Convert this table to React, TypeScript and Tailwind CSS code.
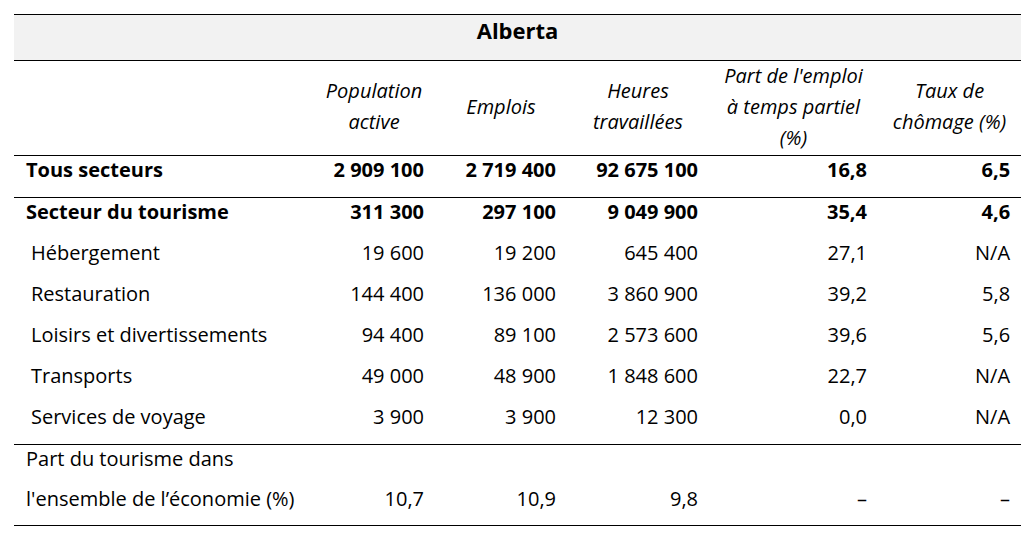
const rows: Array<{ label: string; values: string[]; bold?: boolean; indent?: boolean; borderTop?: boolean }> = [
  { label: 'Tous secteurs', values: ['2 909 100', '2 719 400', '92 675 100', '16,8', '6,5'], bold: true },
  { label: 'Secteur du tourisme', values: ['311 300', '297 100', '9 049 900', '35,4', '4,6'], bold: true, borderTop: true },
  { label: 'Hébergement', values: ['19 600', '19 200', '645 400', '27,1', 'N/A'], indent: true },
  { label: 'Restauration', values: ['144 400', '136 000', '3 860 900', '39,2', '5,8'], indent: true },
  { label: 'Loisirs et divertissements', values: ['94 400', '89 100', '2 573 600', '39,6', '5,6'], indent: true },
  { label: 'Transports', values: ['49 000', '48 900', '1 848 600', '22,7', 'N/A'], indent: true },
  { label: 'Services de voyage', values: ['3 900', '3 900', '12 300', '0,0', 'N/A'], indent: true }
];

const widths = ['w-[299px]', 'w-[122px]', 'w-[132px]', 'w-[142px]', 'w-[169px]', 'w-[143px]'];

const headers: string[][] = [
  ['Population', 'active'],
  ['Emplois'],
  ['Heures', 'travaillées'],
  ["Part de l'emploi", 'à temps partiel', '(%)'],
  ['Taux de', 'chômage (%)']
];

export default function App() {
  return (
    <div className="min-h-[543px] bg-white px-[14px] pt-[14px] text-black" style={{ fontFamily: '"Open Sans", "DejaVu Sans", sans-serif' }}>
      <table className="w-[1007px] table-fixed border-collapse">
        <colgroup>
          {widths.map((w) => (
            <col key={w} className={w} />
          ))}
        </colgroup>
        <thead>
          <tr className="border-y border-black bg-[#f2f2f2]">
            <th colSpan={6} className="h-[46px] p-0 text-center align-top text-[22px] font-bold leading-[30px]">
              Alberta
            </th>
          </tr>
          <tr className="border-b border-black">
            <th />
            {headers.map((lines) => (
              <th key={lines[0]} className="h-[95px] px-[4px] text-center align-middle text-[20px] font-normal italic leading-[31px] whitespace-nowrap">
                <div className="-mt-[4px]">
                  {lines.map((l) => (
                    <div key={l}>{l}</div>
                  ))}
                </div>
              </th>
            ))}
          </tr>
        </thead>
        <tbody className="text-[20px] leading-[27px]">
          {rows.map((r) => (
            <tr key={r.label} className={r.borderTop ? 'border-t border-black' : ''}>
              <td className={`h-[41px] pb-[14px] align-top whitespace-nowrap ${r.indent ? 'pl-[17px]' : 'pl-[12px]'} ${r.bold ? 'font-bold' : ''}`}>{r.label}</td>
              {r.values.map((v, i) => (
                <td key={i} className={`h-[41px] pb-[14px] pr-[11px] text-right align-top whitespace-nowrap ${r.bold ? 'font-bold' : ''}`}>
                  {v}
                </td>
              ))}
            </tr>
          ))}
          <tr className="border-y border-black">
            <td className="pl-[12px] align-top whitespace-nowrap">
              <div className="h-[40px]">Part du tourisme dans</div>
              <div className="h-[40px]">l'ensemble de l’économie (%)</div>
            </td>
            {['10,7', '10,9', '9,8', '–', '–'].map((v, i) => (
              <td key={i} className="pr-[11px] text-right align-top">
                <div className="h-[40px]" />
                <div className="h-[40px]">{v}</div>
              </td>
            ))}
          </tr>
        </tbody>
      </table>
    </div>
  );
}
